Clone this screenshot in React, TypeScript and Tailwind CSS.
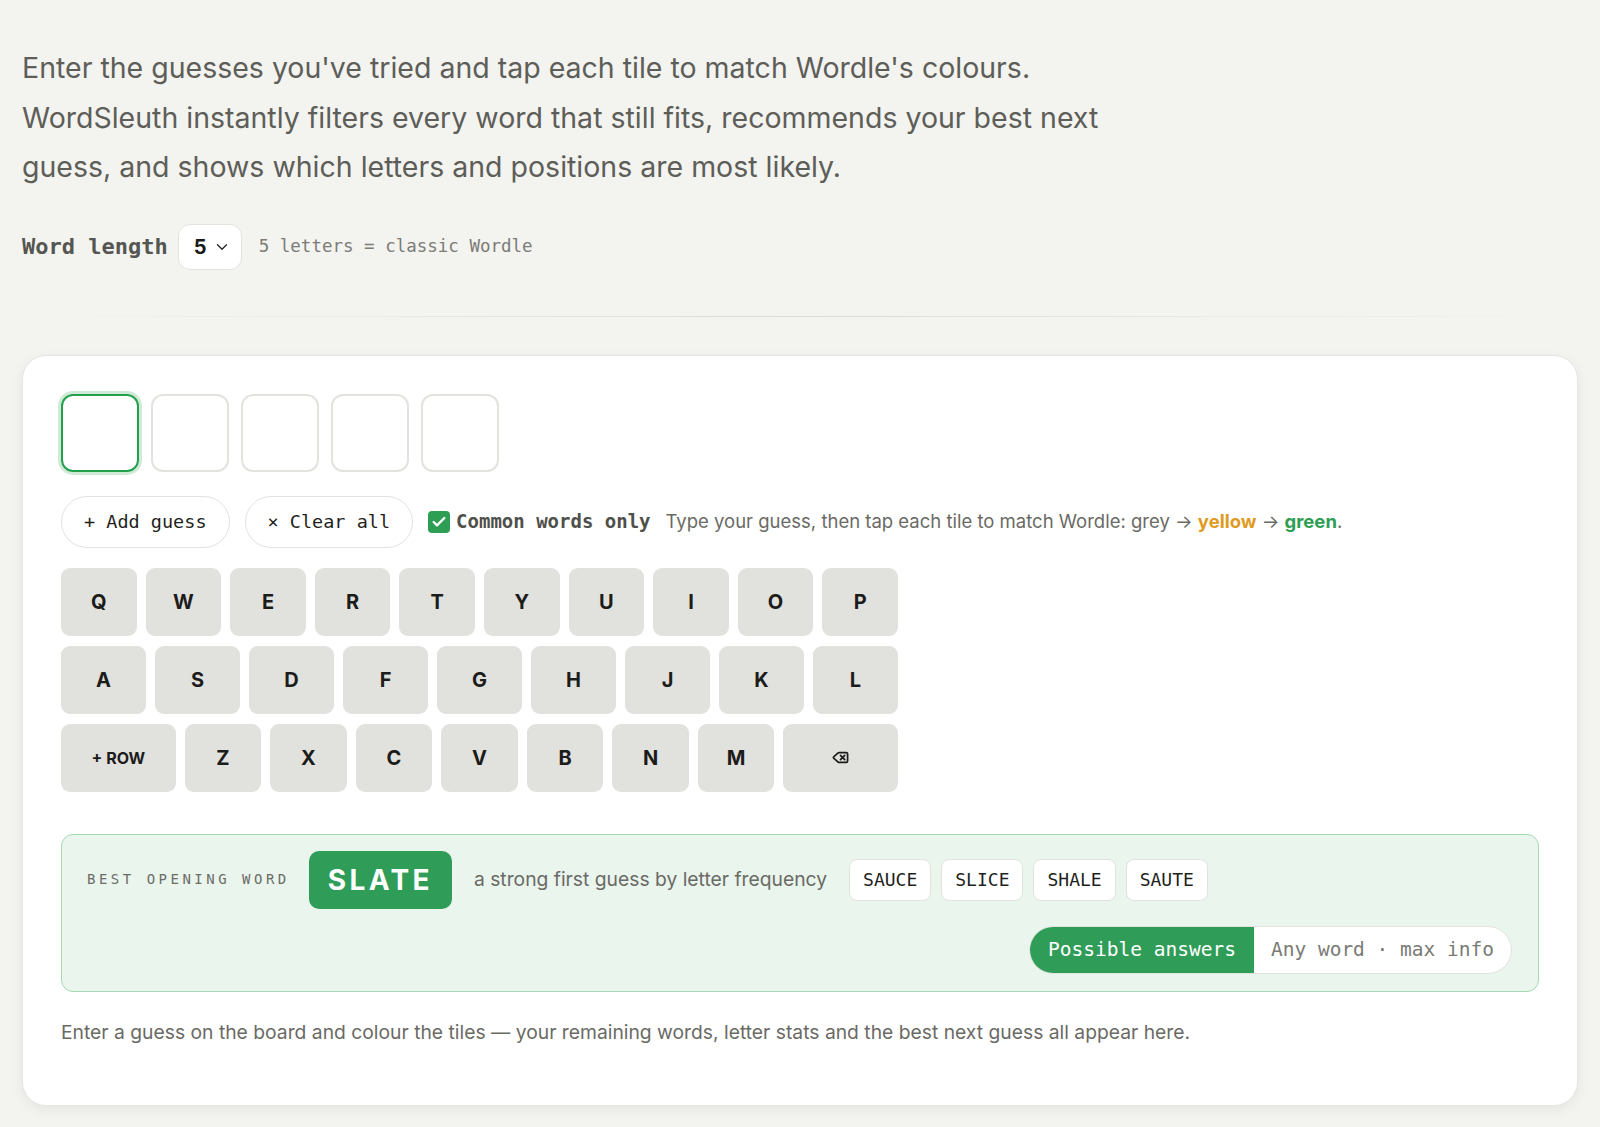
import React from "react";
import { ChevronDown, Check, Delete } from "lucide-react";

const row1 = ["Q", "W", "E", "R", "T", "Y", "U", "I", "O", "P"];
const row2 = ["A", "S", "D", "F", "G", "H", "J", "K", "L"];
const row3 = ["Z", "X", "C", "V", "B", "N", "M"];
const alternatives = ["SAUCE", "SLICE", "SHALE", "SAUTE"];

const mono = "font-['DejaVu_Sans_Mono','Liberation_Mono',monospace]";

const Key = ({ label, wide }: { label: React.ReactNode; wide?: boolean }) => {
  return (
    <button
      className={
        (wide ? "flex-[1.5] text-[16px]" : "flex-1 text-[20px]") +
        " h-[68px] rounded-[9px] bg-[#e1e1de] font-bold text-[#1c1c1a] flex items-center justify-center"
      }
    >
      {label}
    </button>
  );
};

const App = () => {
  return (
    <div className="min-h-screen bg-[#f3f3f0] px-[22px] pt-[43px] pb-6 font-['Inter','Noto_Sans',sans-serif]">
      <p className="max-w-[1130px] text-[28.5px] leading-[49.5px] text-[#5e5e59]">
        Enter the guesses you've tried and tap each tile to match Wordle's colours. WordSleuth instantly
        filters every word that still fits, recommends your best next guess, and shows which letters and
        positions are most likely.
      </p>

      <div className="mt-[32px] flex items-center">
        <span className={mono + " text-[22px] font-bold text-[#555551]"}>Word length</span>
        <div className="ml-[10px] flex h-[46px] w-[64px] items-center justify-between rounded-[12px] border border-[#e4e4df] bg-white pl-[15px] pr-[10px]">
          <span className="text-[20px] font-bold text-[#1a1a18]">5</span>
          <ChevronDown size={18} strokeWidth={1.8} className="text-[#2a2a28]" />
        </div>
        <span className={mono + " ml-[17px] text-[17.5px] text-[#7c7c77]"}>5 letters = classic Wordle</span>
      </div>

      <div className="mt-[46px] h-px bg-gradient-to-r from-transparent via-[#dcdcd7] to-transparent" />

      <div className="mt-[38px] rounded-[24px] border border-[#e6e6e1] bg-white px-[38px] pt-[38px] pb-[59px] shadow-[0_4px_14px_rgba(0,0,0,0.06)]">
        <div className="flex gap-3">
          <div className="h-[78px] w-[78px] rounded-[12px] border-2 border-[#22a04b] ring-[3px] ring-[#cfead6]" />
          {[0, 1, 2, 3].map((i) => (
            <div key={i} className="h-[78px] w-[78px] rounded-[12px] border-2 border-[#e2e2de]" />
          ))}
        </div>

        <div className="mt-[24px] flex items-center">
          <button className={mono + " h-[52px] rounded-full border border-[#e2e2de] px-[22px] text-[18.5px] text-[#1f1f1d]"}>
            + Add guess
          </button>
          <button className={mono + " ml-[15px] h-[52px] rounded-full border border-[#e2e2de] px-[22px] text-[18.5px] text-[#1f1f1d]"}>
            × Clear all
          </button>
          <div className="ml-[15px] flex h-[22px] w-[22px] items-center justify-center rounded-[4px] bg-[#2e9e55]">
            <Check size={16} strokeWidth={3.5} className="text-white" />
          </div>
          <span className={mono + " ml-[6px] text-[19px] font-bold text-[#4f4f4b]"}>Common words only</span>
          <span className="ml-[15px] text-[18.5px] text-[#6a6a65]">
            Type your guess, then tap each tile to match Wordle: grey →{" "}
            <span className="font-bold text-[#e09b1f]">yellow</span> →{" "}
            <span className="font-bold text-[#2e9e55]">green</span>.
          </span>
        </div>

        <div className="mt-[20px] flex w-[837px] flex-col gap-[10px]">
          <div className="flex gap-[9px]">
            {row1.map((k) => (
              <Key key={k} label={k} />
            ))}
          </div>
          <div className="flex gap-[9px]">
            {row2.map((k) => (
              <Key key={k} label={k} />
            ))}
          </div>
          <div className="flex gap-[9px]">
            <Key wide label="+ ROW" />
            {row3.map((k) => (
              <Key key={k} label={k} />
            ))}
            <Key wide label={<Delete size={17} strokeWidth={2.4} />} />
          </div>
        </div>

        <div className="mt-[42px] flex flex-wrap items-center gap-x-[22px] gap-y-[17px] rounded-[12px] border border-[#a6d8b4] bg-[#e9f5ed] px-[25px] pt-[16px] pb-[17px]">
          <span className={mono + " -mr-[3px] text-[14px] tracking-[0.25em] text-[#6c6c67]"}>BEST OPENING WORD</span>
          <div className="flex h-[58px] items-center rounded-[10px] bg-[#2f9d58] px-[19px] text-[28px] font-bold tracking-[0.12em] text-white">
            SLATE
          </div>
          <span className="text-[19.3px] text-[#6a6a65]">a strong first guess by letter frequency</span>
          <div className="flex gap-[10px]">
            {alternatives.map((w) => (
              <span
                key={w}
                className={mono + " flex h-[42px] items-center rounded-[8px] border border-[#e2e2de] bg-white px-[13px] text-[18px] text-[#1f1f1d]"}
              >
                {w}
              </span>
            ))}
          </div>
          <div className="ml-auto mr-[1px] flex h-[48px] overflow-hidden rounded-full border border-[#e2e2de] bg-white">
            <span className={mono + " flex items-center bg-[#2f9d58] px-[18px] text-[19.5px] text-white"}>
              Possible answers
            </span>
            <span className={mono + " flex items-center px-[17px] text-[19.5px] text-[#7a7a75]"}>
              Any word · max info
            </span>
          </div>
        </div>

        <p className="mt-[26px] text-[19.3px] text-[#6a6a65]">
          Enter a guess on the board and colour the tiles — your remaining words, letter stats and the best
          next guess all appear here.
        </p>
      </div>
    </div>
  );
};

export default App;
